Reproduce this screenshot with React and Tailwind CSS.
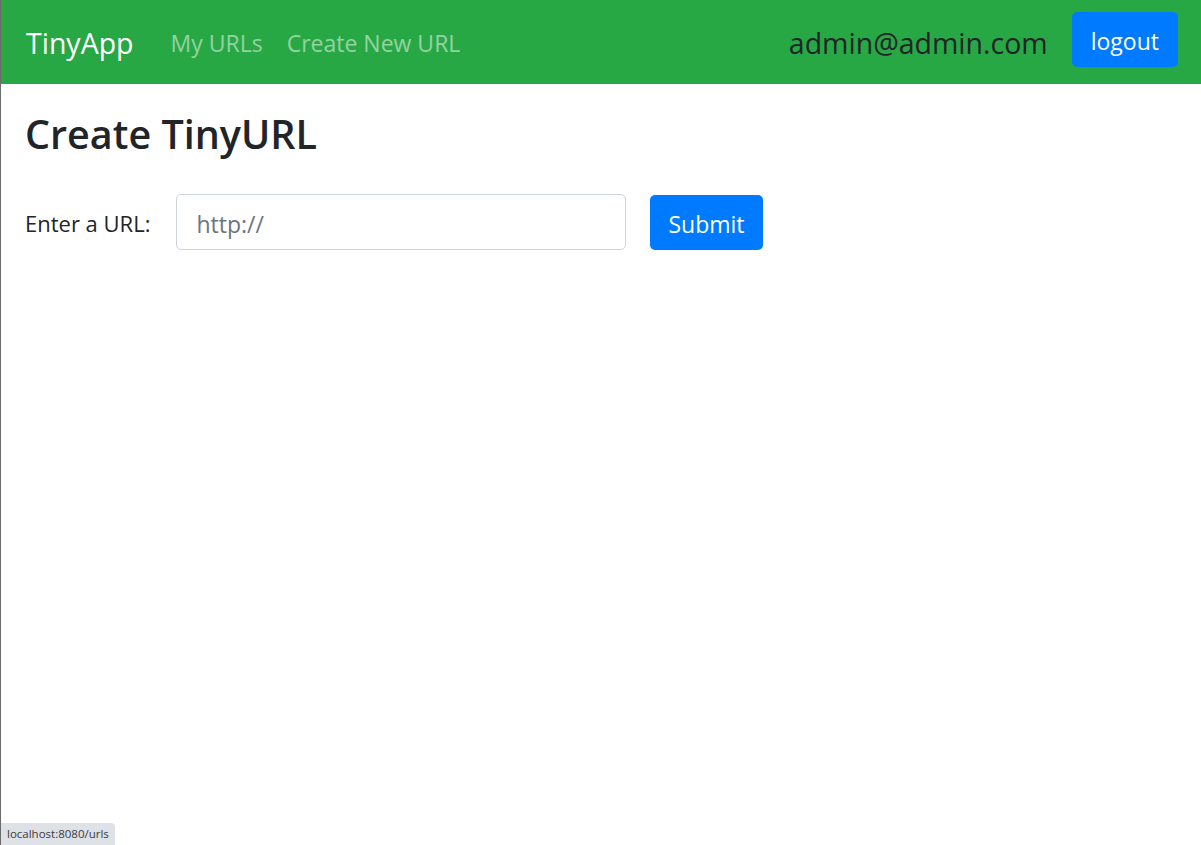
import React from "react";

const font = { fontFamily: '"Open Sans", "Noto Sans", Arial, sans-serif' };

const Navbar = () => (
  <nav className="h-[84px] bg-[#28a745] flex items-center pl-[25px] pr-[23px]">
    <a href="#" className="text-white text-[28.5px] mr-[37px] leading-none pt-[2px]">
      TinyApp
    </a>
    <a href="#" className="text-white/50 text-[23px] mr-[24px] leading-none pt-[2px]">
      My URLs
    </a>
    <a href="#" className="text-white/50 text-[23px] leading-none pt-[2px]">
      Create New URL
    </a>
    <div className="ml-auto flex items-center gap-[24px]">
      <span className="text-[#212529] text-[28.5px] leading-none pt-[2px]">admin@admin.com</span>
      <button className="h-[55px] mb-[5px] pt-[3px] px-[19px] bg-[#007bff] text-white text-[23px] rounded-[5px]">
        logout
      </button>
    </div>
  </nav>
);

export default function App() {
  return (
    <div className="relative min-h-screen bg-white border-l border-[#6b6b6b] text-[#212529]" style={font}>
      <Navbar />
      <main className="pl-[24px] pt-[26px]">
        <h1 className="text-[39.5px] font-semibold leading-tight mb-[35px]">Create TinyURL</h1>
        <form className="flex items-center" onSubmit={(e) => e.preventDefault()}>
          <label className="text-[22px] mr-[26px] pt-[2px]">Enter a URL:</label>
          <input
            type="text"
            placeholder="http://"
            className="w-[450px] h-[56px] pt-[3px] px-[19px] text-[23px] border border-[#ced4da] rounded-[5px] placeholder:text-[#6c757d] outline-none"
          />
          <button className="ml-[24px] h-[55px] pt-[3px] px-[18px] bg-[#007bff] text-white text-[23px] rounded-[5px]">
            Submit
          </button>
        </form>
      </main>
      <div className="absolute bottom-0 left-0 h-[22px] px-[6px] flex items-center bg-[#dee1e6] rounded-tr-[4px] text-[11.5px] text-[#3c3c3c]">
        localhost:8080/urls
      </div>
    </div>
  );
}
